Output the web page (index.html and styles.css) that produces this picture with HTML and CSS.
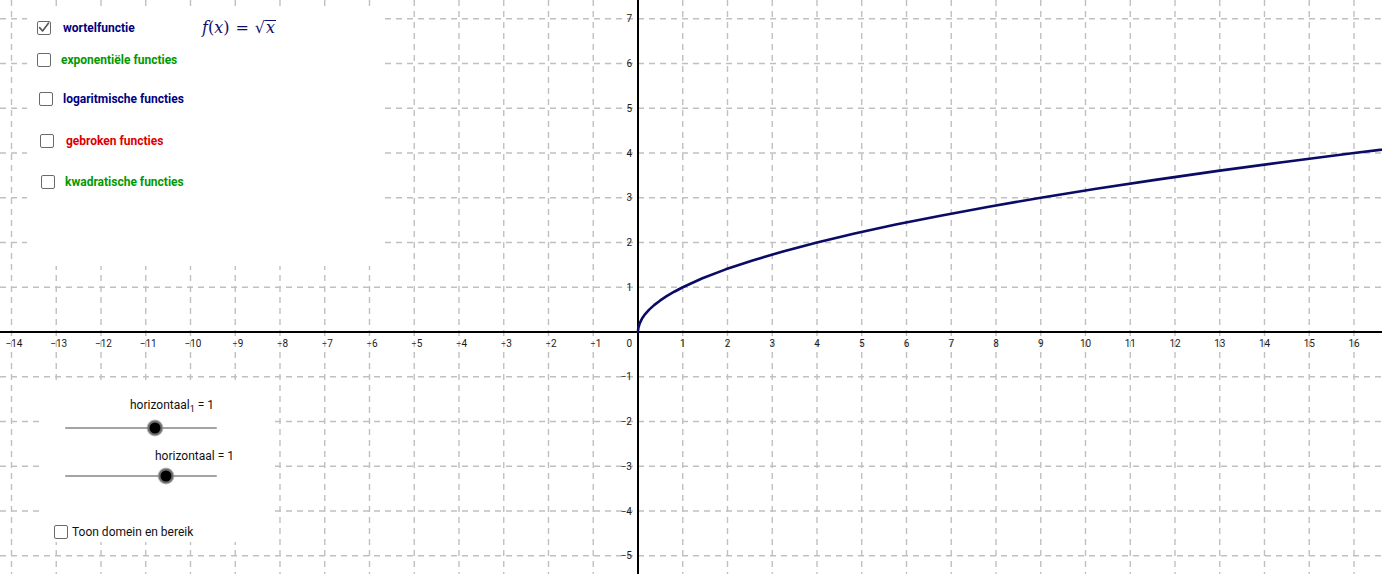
FILE: index.html
```html
<!DOCTYPE html>
<html lang="nl">
<head>
<meta charset="utf-8">
<title>Functies</title>
<link rel="stylesheet" href="styles.css">
</head>
<body>
<div class="applet">
  <svg class="graph" width="1382" height="574" viewBox="0 0 1382 574" xmlns="http://www.w3.org/2000/svg">
    <g class="grid">
      <line x1="11.5" y1="0" x2="11.5" y2="574"/>
      <line x1="56.25" y1="0" x2="56.25" y2="574"/>
      <line x1="101" y1="0" x2="101" y2="574"/>
      <line x1="145.75" y1="0" x2="145.75" y2="574"/>
      <line x1="190.5" y1="0" x2="190.5" y2="574"/>
      <line x1="235.25" y1="0" x2="235.25" y2="574"/>
      <line x1="280" y1="0" x2="280" y2="574"/>
      <line x1="324.75" y1="0" x2="324.75" y2="574"/>
      <line x1="369.5" y1="0" x2="369.5" y2="574"/>
      <line x1="414.25" y1="0" x2="414.25" y2="574"/>
      <line x1="459" y1="0" x2="459" y2="574"/>
      <line x1="503.75" y1="0" x2="503.75" y2="574"/>
      <line x1="548.5" y1="0" x2="548.5" y2="574"/>
      <line x1="593.25" y1="0" x2="593.25" y2="574"/>
      <line x1="682.75" y1="0" x2="682.75" y2="574"/>
      <line x1="727.5" y1="0" x2="727.5" y2="574"/>
      <line x1="772.25" y1="0" x2="772.25" y2="574"/>
      <line x1="817" y1="0" x2="817" y2="574"/>
      <line x1="861.75" y1="0" x2="861.75" y2="574"/>
      <line x1="906.5" y1="0" x2="906.5" y2="574"/>
      <line x1="951.25" y1="0" x2="951.25" y2="574"/>
      <line x1="996" y1="0" x2="996" y2="574"/>
      <line x1="1040.75" y1="0" x2="1040.75" y2="574"/>
      <line x1="1085.5" y1="0" x2="1085.5" y2="574"/>
      <line x1="1130.25" y1="0" x2="1130.25" y2="574"/>
      <line x1="1175" y1="0" x2="1175" y2="574"/>
      <line x1="1219.75" y1="0" x2="1219.75" y2="574"/>
      <line x1="1264.5" y1="0" x2="1264.5" y2="574"/>
      <line x1="1309.25" y1="0" x2="1309.25" y2="574"/>
      <line x1="1354" y1="0" x2="1354" y2="574"/>
      <line x1="0" y1="18.75" x2="1382" y2="18.75"/>
      <line x1="0" y1="63.5" x2="1382" y2="63.5"/>
      <line x1="0" y1="108.25" x2="1382" y2="108.25"/>
      <line x1="0" y1="153" x2="1382" y2="153"/>
      <line x1="0" y1="197.75" x2="1382" y2="197.75"/>
      <line x1="0" y1="242.5" x2="1382" y2="242.5"/>
      <line x1="0" y1="287.25" x2="1382" y2="287.25"/>
      <line x1="0" y1="376.75" x2="1382" y2="376.75"/>
      <line x1="0" y1="421.5" x2="1382" y2="421.5"/>
      <line x1="0" y1="466.25" x2="1382" y2="466.25"/>
      <line x1="0" y1="511" x2="1382" y2="511"/>
      <line x1="0" y1="555.75" x2="1382" y2="555.75"/>
    </g>
    <g class="axes">
      <line x1="0" y1="332" x2="1382" y2="332"/>
      <line x1="638" y1="0" x2="638" y2="574"/>
    </g>
    <g class="xlabels">
      <text x="14">−14</text>
      <text x="58.75">−13</text>
      <text x="103.5">−12</text>
      <text x="148.25">−11</text>
      <text x="193">−10</text>
      <text x="237.75">−9</text>
      <text x="282.5">−8</text>
      <text x="327.25">−7</text>
      <text x="372">−6</text>
      <text x="416.75">−5</text>
      <text x="461.5">−4</text>
      <text x="506.25">−3</text>
      <text x="551">−2</text>
      <text x="595.75">−1</text>
      <text x="682.75">1</text>
      <text x="727.5">2</text>
      <text x="772.25">3</text>
      <text x="817">4</text>
      <text x="861.75">5</text>
      <text x="906.5">6</text>
      <text x="951.25">7</text>
      <text x="996">8</text>
      <text x="1040.75">9</text>
      <text x="1085.5">10</text>
      <text x="1130.25">11</text>
      <text x="1175">12</text>
      <text x="1219.75">13</text>
      <text x="1264.5">14</text>
      <text x="1309.25">15</text>
      <text x="1354">16</text>
    </g>
    <g class="ylabels">
      <text x="632" y="347">0</text>
      <text x="632" y="22.25">7</text>
      <text x="632" y="67">6</text>
      <text x="632" y="111.75">5</text>
      <text x="632" y="156.5">4</text>
      <text x="632" y="201.25">3</text>
      <text x="632" y="246">2</text>
      <text x="632" y="290.75">1</text>
      <text x="632" y="380.25">−1</text>
      <text x="632" y="425">−2</text>
      <text x="632" y="469.75">−3</text>
      <text x="632" y="514.5">−4</text>
      <text x="632" y="559.25">−5</text>
    </g>
    <polyline class="curve" points="638,332 638.11,329.76 638.45,327.53 639.79,323.05 642.03,318.58 645.16,314.1 649.19,309.63 654.11,305.15 659.93,300.68 666.64,296.2 674.25,291.73 682.75,287.25 702.44,278.3 725.71,269.35 752.56,260.4 782.99,251.45 817,242.5 854.59,233.55 895.76,224.6 940.51,215.65 988.84,206.7 1040.75,197.75 1096.24,188.8 1155.31,179.85 1217.96,170.9 1284.19,161.95 1354,153 1427.39,144.05"/>
  </svg>

  <div class="panel panel-top">
    <div class="row r1">
      <span class="cb checked"><svg viewBox="0 0 14 14" width="14" height="14"><path d="M2.6 6.6 L5.6 10 L11.4 2.2"/></svg></span>
      <span class="lbl navy wide">wortelfunctie</span>
      <span class="formula"><i>f</i>(<i>x</i>)<span class="eq">=</span><span class="root">√</span><span class="rad"><i>x</i></span></span>
    </div>
    <div class="row r2">
      <span class="cb"></span>
      <span class="lbl green">exponentiële functies</span>
    </div>
    <div class="row r3">
      <span class="cb"></span>
      <span class="lbl navy">logaritmische functies</span>
    </div>
    <div class="row r4">
      <span class="cb"></span>
      <span class="lbl red">gebroken functies</span>
    </div>
    <div class="row r5">
      <span class="cb"></span>
      <span class="lbl green">kwadratische functies</span>
    </div>
  </div>

  <div class="panel panel-bottom">
    <div class="slider-label sl1">horizontaal<sub>1</sub> = 1</div>
    <div class="slider s1"><div class="track"></div><div class="knob" style="left: 59.2%"></div></div>
    <div class="slider-label sl2">horizontaal = 1</div>
    <div class="slider s2"><div class="track"></div><div class="knob" style="left: 66.4%"></div></div>
    <div class="row r-toon">
      <span class="cb"></span>
      <span class="lbl plain">Toon domein en bereik</span>
    </div>
  </div>
</div>
</body>
</html>
```

FILE: styles.css
```css
html, body {
  margin: 0;
  padding: 0;
  background: #ffffff;
}

body {
  width: 1382px;
  height: 574px;
  overflow: hidden;
  font-family: "Roboto", "Liberation Sans", sans-serif;
}

.applet {
  position: relative;
  width: 1382px;
  height: 574px;
  overflow: hidden;
  background: #ffffff;
}

.graph {
  display: block;
}

.grid line {
  stroke: #c0c0c0;
  stroke-width: 1.4;
  stroke-dasharray: 6 5;
}

.axes line {
  stroke: #000000;
  stroke-width: 2;
}

.xlabels text,
.ylabels text {
  font-family: "Roboto", "Liberation Sans", sans-serif;
  font-size: 10px;
  fill: #1a1a1a;
}

.xlabels text {
  text-anchor: middle;
}

.xlabels text {
  transform: translateY(347px);
}

.ylabels text {
  text-anchor: end;
}

.curve {
  fill: none;
  stroke: #0b0b66;
  stroke-width: 2.6;
  stroke-linejoin: round;
  stroke-linecap: round;
}

/* panels */
.panel {
  position: absolute;
  background: #ffffff;
  display: flex;
  flex-direction: column;
  box-sizing: border-box;
}

.panel-top {
  left: 27px;
  top: 6px;
  width: 358px;
  height: 260px;
  padding-top: 15px;
}

.panel-bottom {
  left: 40px;
  top: 385px;
  width: 232px;
  height: 157px;
  padding-top: 13px;
}

.row {
  display: flex;
  align-items: center;
  height: 14px;
}

.cb {
  box-sizing: border-box;
  width: 14px;
  height: 14px;
  border: 1.3px solid #6a6a6a;
  border-radius: 2px;
  background: #ffffff;
  flex: none;
  position: relative;
}

.cb svg {
  position: absolute;
  left: -1px;
  top: -1px;
}

.cb svg path {
  fill: none;
  stroke: #555555;
  stroke-width: 1.6;
  stroke-linecap: round;
  stroke-linejoin: round;
}

.lbl {
  font-size: 12px;
  line-height: 14px;
  font-weight: 700;
  white-space: nowrap;
}

.navy { color: #000080; }
.green { color: #009900; }
.red { color: #dd0000; }

.plain {
  font-weight: 400;
  color: #111111;
}

.r1 { margin-left: 10px; }
.r1 .lbl { margin-left: 12px; }
.r2 { margin-top: 18px; margin-left: 10px; }
.r2 .lbl { margin-left: 10px; }
.r3 { margin-top: 25px; margin-left: 12px; }
.r3 .lbl { margin-left: 10px; }
.r4 { margin-top: 28px; margin-left: 13px; }
.r4 .lbl { margin-left: 12px; }
.r5 { margin-top: 27px; margin-left: 14px; }
.r5 .lbl { margin-left: 10px; }

.wide {
  width: 139px;
}

.formula {
  font-family: "DejaVu Serif", "Liberation Serif", serif;
  font-size: 16px;
  color: #10106a;
  white-space: nowrap;
  display: flex;
  align-items: baseline;
  line-height: 18px;
}

.formula i {
  font-style: italic;
}

.formula .eq {
  margin: 0 6px;
}

.formula .root {
  font-style: normal;
}

.formula .rad {
  border-top: 1.3px solid #10106a;
  line-height: 14px;
  padding: 0 1px;
}

/* sliders */
.slider-label {
  font-size: 12px;
  line-height: 14px;
  color: #111111;
  white-space: nowrap;
  height: 14px;
}

.slider-label sub {
  font-size: 9px;
  line-height: 0;
  vertical-align: -3px;
}

.sl1 { margin-left: 90px; }
.sl2 { margin-left: 115px; margin-top: 13px; }

.slider {
  position: relative;
  width: 152px;
  height: 17px;
  margin-left: 25px;
}

.s1 { margin-top: 7px; }
.s2 { margin-top: 4px; }

.track {
  position: absolute;
  left: 0;
  right: 0;
  top: 7.5px;
  height: 2px;
  background: #a3a3a3;
  border-radius: 1px;
}

.knob {
  position: absolute;
  top: 8.5px;
  width: 11px;
  height: 11px;
  border-radius: 50%;
  background: #000000;
  border: 2.5px solid #6e6e6e;
  box-shadow: 0 0 0 1px rgba(150, 150, 150, 0.6);
  transform: translate(-50%, -50%);
}

.r-toon {
  margin-top: 41px;
  margin-left: 14px;
}

.r-toon .lbl {
  margin-left: 4px;
}
```
